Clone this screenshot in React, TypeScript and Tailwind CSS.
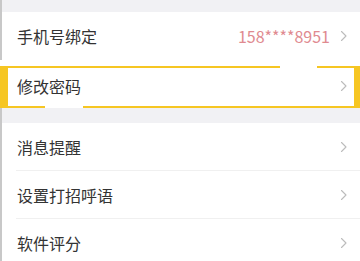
import React from "react";

const Chevron = () => (
  <svg width="8" height="12" viewBox="0 0 8 12" className="shrink-0">
    <path d="M1.5 1.5L6 6l-4.5 4.5" fill="none" stroke="#bcbcbc" strokeWidth="1.1" strokeLinecap="round" strokeLinejoin="round" />
  </svg>
);

const Row = ({ label, divider }: { label: string; divider?: boolean }) => (
  <div className="bg-white border-l-2 border-[#c8c8c8] shrink-0">
    <div className={`${divider ? "h-[47px]" : "h-12"} flex items-center pl-[15px] pr-[12px]`}>
      <span className="flex-1 text-[16px] text-[#333333]">{label}</span>
      <Chevron />
    </div>
    {divider && <div className="ml-[14px] h-px bg-[#f0f0f0]" />}
  </div>
);

export default function App() {
  return (
    <div
      className="w-[360px] h-[261px] overflow-hidden bg-[#f1f1f4] flex flex-col"
      style={{ fontFamily: '"Noto Sans CJK SC", "Noto Sans", sans-serif' }}
    >
      <div className="h-3 shrink-0 border-l-2 border-[#c8c8c8]" />
      <div className="bg-white border-l-2 border-[#c8c8c8] shrink-0">
        <div className="h-12 flex items-center pl-[15px] pr-[12px]">
          <span className="flex-1 text-[16px] text-[#333333]">手机号绑定</span>
          <span className="text-[16px] text-[#e08a90] mr-[10px]">158****8951</span>
          <Chevron />
        </div>
      </div>
      <div className="bg-white pt-[6px] shrink-0">
        <div className="relative h-[42px] border-t-2 border-b-2 border-l-[8px] border-r-[6px] border-[#f6c623] flex items-center pl-[9px] pr-[6px] pb-[2px]">
          <span className="flex-1 text-[16px] text-[#333333]">修改密码</span>
          <Chevron />
          <span className="absolute -top-[2px] left-[272px] w-[37px] h-[2px] bg-white" />
          <span className="absolute -bottom-[2px] left-[37px] w-[38px] h-[2px] bg-white" />
        </div>
      </div>
      <div className="h-[15px] shrink-0 border-l-2 border-[#c8c8c8]" />
      <Row label="消息提醒" divider />
      <Row label="设置打招呼语" divider />
      <Row label="软件评分" />
    </div>
  );
}
